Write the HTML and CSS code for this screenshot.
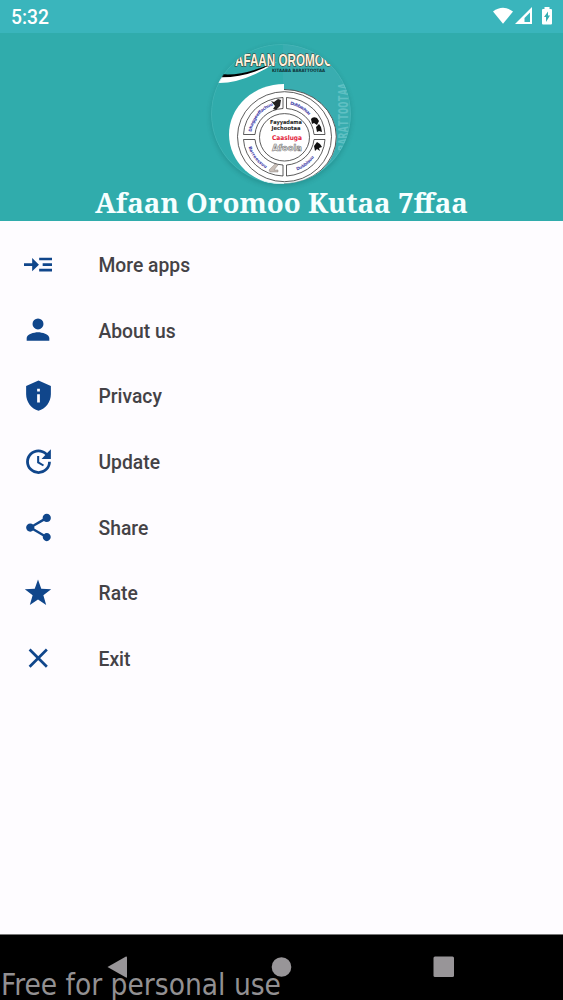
FILE: index.html
```html
<!DOCTYPE html>
<html lang="en">
<head>
    <meta charset="UTF-8">
    <meta name="viewport" content="width=device-width, initial-scale=1.0">
    <title>Afaan Oromoo Kutaa 7ffaa</title>
    <link rel="stylesheet" href="styles.css">
</head>
<body>
    <div class="status-bar">
        <span class="clock">5:32</span>
        <svg class="status-icons" width="62" height="20" viewBox="0 0 62 20">
            <path d="M1 4.500Q11 -3 21 4.500L11 16.800Z" fill="#fff"/>
            <path d="M40 0V17H23Z" fill="#fff"/>
            <path d="M38 5.500V15H32.500V11Z" fill="#3ab5bc"/>
            <path d="M52.500 0h5v2h1.500q1 0 1 1v13.500q0 1-1 1h-8q-1 0-1-1V3q0-1 1-1h1.500z" fill="#fff"/>
            <path d="M56 4.500v4h2l-4 6.500v-5h-2z" fill="#35aeb2"/>
        </svg>
    </div>
    <header class="header">
        <svg class="cover" width="140" height="140" viewBox="211 44 140 140">
            <defs>
                <clipPath id="round"><circle cx="281" cy="114" r="70"/></clipPath>
                <path id="arc-tl" d="M251.500 132A33 33 0 0 1 278 104"/>
                <path id="arc-tr" d="M290 104.500A33 33 0 0 1 316 129"/>
                <path id="arc-bl" d="M248.500 147A37 37 0 0 0 276 172"/>
                <path id="arc-br" d="M297 170.500A36 36 0 0 0 319 146"/>
            </defs>
            <g clip-path="url(#round)">
                <rect x="211" y="44" width="140" height="140" fill="#30acac"/>
                <rect x="283" y="44" width="68" height="140" fill="#39adb0"/>
                <text class="side-text" transform="translate(344 151) rotate(-90)" textLength="68" lengthAdjust="spacingAndGlyphs">BARATTOOTAA</text>
                <path d="M211 75Q236 80 277 62Q243 84 217 83Z" fill="#fff"/>
                <path d="M211 72Q236 80 275 62Q247 79 215 77Z" fill="#000"/>
                <text class="cover-title" x="235" y="66" textLength="98" lengthAdjust="spacingAndGlyphs">AFAAN OROMOO</text>
                <text class="cover-sub" x="272" y="72" textLength="53" lengthAdjust="spacingAndGlyphs">KITAABA BARATTOOTAA</text>
                <path d="M284 84A55 50.500 0 0 0 284 185V84Z" fill="#fff"/>
                <ellipse cx="284" cy="137" rx="52.500" ry="47.500" fill="#fff"/>
                <path d="M284 89.500A52 47 0 0 1 284 184" class="line"/>
                <ellipse cx="284.500" cy="136.700" rx="47" ry="45" class="line"/>
                <ellipse cx="284.500" cy="137.300" rx="25" ry="23.700" class="line"/>
                <path class="line" d="M283 97.500V108.500A29.500 28 0 0 0 255 134.500H243.500A41 38.500 0 0 1 283 97.500Z"/>
                <path class="line" d="M286.500 97.500V108.500A29.500 28 0 0 1 314 134.500H325A41 38.500 0 0 0 286.500 97.500Z"/>
                <path class="line" d="M283 176V165A29.500 28 0 0 1 255 139.500H243.500A41 38.500 0 0 0 283 176Z"/>
                <path class="line" d="M286.500 176V165A29.500 28 0 0 0 314 139.500H325A41 38.500 0 0 1 286.500 176Z"/>
                <text class="arc-text"><textPath href="#arc-tl" textLength="36">Dhaggeeffachuu</textPath></text>
                <text class="arc-text"><textPath href="#arc-tr" textLength="22">Dubbachuu</textPath></text>
                <text class="arc-text"><textPath href="#arc-bl" textLength="28">Barreessuu</textPath></text>
                <text class="arc-text"><textPath href="#arc-br" textLength="22">Dubbisuu</textPath></text>
                <path d="M271 101l3 1 4-3 3 1-1 6-4 4-3-1 2-3z" fill="#222"/>
                <path d="M311 119q2-3 6-1l2 3-2 4-3-2-2 1z M316 127l3-3 2 3 1 5-3-1-2 1z M314 146l3-4 3 2 2 3-3 1 1 3-3-2-2 2z" fill="#111"/>
                <path d="M269 170l6-6 3 1-4 5 4 0v2h-8z" fill="#c9bfb8" stroke="#776e69" stroke-width=".4"/>
                <text class="hub-text" x="270" y="123.500" textLength="32" lengthAdjust="spacingAndGlyphs">Fayyadama</text>
                <text class="hub-text" x="271.500" y="130" textLength="29" lengthAdjust="spacingAndGlyphs">Jechootaa</text>
                <text class="hub-red" x="272" y="139.500" textLength="30" lengthAdjust="spacingAndGlyphs">Caasluga</text>
                <text class="hub-grey" x="272" y="150.500" textLength="30" lengthAdjust="spacingAndGlyphs">Afoola</text>
            </g>
            <circle cx="281" cy="114" r="69.500" fill="none" stroke="#67c4c4" stroke-width=".6" opacity=".5"/>
        </svg>
        <svg class="title" width="373" height="34">
            <text x="0" y="25" textLength="373" lengthAdjust="spacingAndGlyphs">Afaan Oromoo Kutaa 7ffaa</text>
        </svg>
    </header>
    <nav class="menu">
        <a class="item">
            <svg class="icon" viewBox="0 0 24 24"><path d="M13 5.700h11v2.300H13zm3 4.800h8v2.300h-8zm-3 4.800h11v2.300H13zM0 10.500h7V6l5.800 5.700L7 17.400v-4.500H0z"/></svg>
            <span>More apps</span>
        </a>
        <a class="item">
            <svg class="icon" viewBox="0 0 24 24"><path d="M12 11.500a4.700 4.700 0 1 0 0-9.400 4.700 4.700 0 0 0 0 9.400zM2.300 21.300v-2.500c0-3.100 6.300-4.900 9.700-4.900s9.700 1.800 9.700 4.900v2.500z"/></svg>
            <span>About us</span>
        </a>
        <a class="item">
            <svg class="icon tall" viewBox="0 0 24 24"><path fill-rule="evenodd" d="M12 1L3 5v6c0 5.550 3.840 10.740 9 12 5.160-1.260 9-6.450 9-12V5l-9-4zm-1 6h2v2h-2V7zm0 4h2v6h-2v-6z"/></svg>
            <span>Privacy</span>
        </a>
        <a class="item">
            <svg class="icon tall" viewBox="0 0 24 24"><path d="M21 10.120h-6.780l2.740-2.820c-2.730-2.700-7.150-2.800-9.880-.1-2.730 2.710-2.730 7.080 0 9.790s7.150 2.710 9.880 0C18.320 15.650 19 14.080 19 12.100h2c0 1.980-.88 4.550-2.640 6.290-3.510 3.480-9.210 3.480-12.720 0-3.500-3.470-3.530-9.110-.02-12.580s9.140-3.470 12.650 0L21 3v7.120zM12.500 8v4.250l3.500 2.080-.72 1.210L11 13V8h1.500z"/></svg>
            <span>Update</span>
        </a>
        <a class="item">
            <svg class="icon tall" viewBox="0 0 24 24"><path d="M18 16.080c-.76 0-1.440.3-1.960.77L8.910 12.700c.05-.23.09-.46.09-.7s-.04-.47-.09-.7l7.050-4.110c.54.5 1.250.81 2.040.81 1.660 0 3-1.340 3-3s-1.340-3-3-3-3 1.340-3 3c0 .24.040.47.090.7L8.040 9.810C7.500 9.310 6.790 9 6 9c-1.660 0-3 1.340-3 3s1.340 3 3 3c.79 0 1.500-.31 2.040-.81l7.120 4.160c-.05.21-.08.43-.08.650 0 1.610 1.310 2.920 2.920 2.920s2.920-1.310 2.920-2.920-1.310-2.920-2.920-2.920z"/></svg>
            <span>Share</span>
        </a>
        <a class="item">
            <svg class="icon" viewBox="0 0 24 24"><path d="M12 .5l2.800 7.800 8.500.4-6.700 5.200 2.400 8.300L12 17.500l-7 4.700 2.400-8.300L.7 8.700l8.500-.4z"/></svg>
            <span>Rate</span>
        </a>
        <a class="item">
            <svg class="icon" viewBox="0 0 24 24"><path d="M4.800 4.700l14.800 14.800M19.600 4.700L4.800 19.500" fill="none" stroke="#10468b" stroke-width="2.300"/></svg>
            <span>Exit</span>
        </a>
    </nav>
    <footer class="nav-bar">
        <svg class="nav-icon" viewBox="0 0 24 24"><path d="M1.500 12L20 1.500Q21 1.300 21 2.500V22Q21 23 20 22.500Z"/></svg>
        <svg class="nav-icon" viewBox="0 0 24 24"><circle cx="12.500" cy="12" r="9.800"/></svg>
        <svg class="nav-icon" viewBox="0 0 24 24"><rect x="1.500" y="1.500" width="20.500" height="20.500" rx="1.500"/></svg>
        <svg class="watermark" width="282" height="38">
            <text x="0" y="26" textLength="280" lengthAdjust="spacingAndGlyphs">Free for personal use</text>
        </svg>
    </footer>
</body>
</html>
```

FILE: styles.css
```css
* {box-sizing:border-box}
body {margin:0; height:1000px; display:flex; flex-direction:column; background:#fefcff; font-family:Roboto, "Liberation Sans", sans-serif; overflow:hidden}
.status-bar {height:33px; padding:0 9px 0 11px; display:flex; justify-content:space-between; align-items:center; background:#3ab5bc; color:#fff}
.clock {font-size:19.3px; font-weight:500; padding-top:1px}
.status-icons {display:block; margin-top:1px}
.header {height:188px; padding-top:11px; display:flex; flex-direction:column; align-items:center; background:#30acac}
.cover {flex:none; margin-right:1px; border-radius:50%; box-shadow:0 2px 5px rgba(0,60,60,0.22)}
.title {flex:none; margin-top:4px; overflow:visible}
.title text {font:bold 27px "Noto Serif", "DejaVu Serif Condensed", "DejaVu Serif", serif; fill:#f6ffff}
.line {fill:none; stroke:#333; stroke-width:0.8}
.cover-title {font:bold 17px "Liberation Sans Narrow", "Liberation Sans", sans-serif; fill:#fff2dc; stroke:#3a2c1c; stroke-width:1.2; paint-order:stroke}
.cover-sub {font:bold 4.5px "DejaVu Sans", sans-serif; fill:#0c3035}
.side-text {font:bold 14px "DejaVu Sans Mono", monospace; fill:#7ccdd0; opacity:0.6; dominant-baseline:middle}
.arc-text {font:bold 4.3px "DejaVu Sans", sans-serif; fill:#4240a8}
.hub-text {font:bold 5.5px "DejaVu Sans", sans-serif; fill:#222}
.hub-red {font:bold 6.5px "DejaVu Sans", sans-serif; fill:#e3203a}
.hub-grey {font:bold 8.5px "DejaVu Sans", sans-serif; fill:#eee; stroke:#777; stroke-width:0.6}
.menu {flex:1; padding-top:11px}
.item {height:65.6px; padding-left:24px; display:flex; align-items:center; color:#444246; font-size:19.3px; font-weight:500}
.item span {margin-left:46.5px; padding-top:2px}
.icon {width:28px; height:28px; flex:none; fill:#10468b}
.icon.tall {width:33px; height:33px; margin:0 -2.5px}
.nav-bar {height:66px; position:relative; display:flex; justify-content:space-between; padding:20px 107px 0 106px; background:#000; border-top:1px solid #777}
.nav-icon {width:24px; height:24px; fill:#989598}
.watermark {position:absolute; left:1px; top:34px}
.watermark text {font:29.5px "DejaVu Sans Condensed", "DejaVu Sans", sans-serif; fill:#929092}
```
